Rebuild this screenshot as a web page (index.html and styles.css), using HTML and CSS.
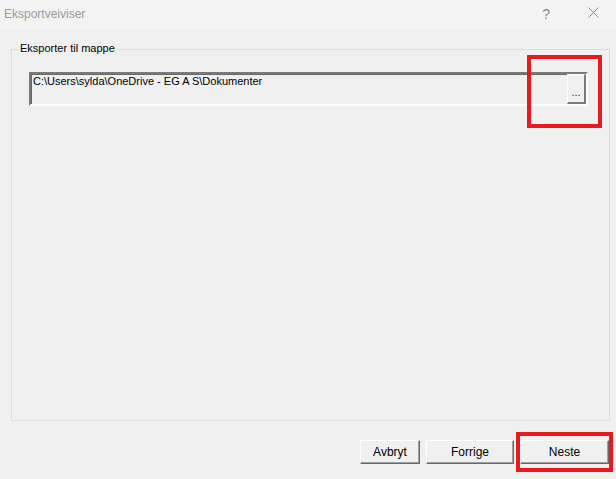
FILE: index.html
```html
<!DOCTYPE html>
<html lang="nb">
<head>
    <meta charset="UTF-8">
    <title>Eksportveiviser</title>
    <link rel="stylesheet" href="styles.css">
</head>
<body>
    <div class="window">
        <!-- Title bar -->
        <div class="titlebar">
            <span class="title">Eksportveiviser</span>
            <span class="help">?</span>
            <svg class="close" width="11" height="11" viewBox="0 0 11 11">
                <path d="M0.5 0.5 L10.5 10.5 M10.5 0.5 L0.5 10.5" stroke="#8a8a8a" stroke-width="1" fill="none"/>
            </svg>
        </div>

        <!-- Client area -->
        <div class="client">
            <div class="group">
                <div class="group-title">Eksporter til mappe</div>
                <div class="pathbox">
                    <span class="path">C:\Users\sylda\OneDrive - EG A S\Dokumenter</span>
                    <button class="browse">...</button>
                </div>
            </div>

            <div class="footer">
                <button class="btn btn-small">Avbryt</button>
                <button class="btn">Forrige</button>
                <button class="btn btn-default">Neste</button>
            </div>
        </div>

        <div class="mark mark-browse"></div>
        <div class="mark mark-next"></div>
    </div>
</body>
</html>
```

FILE: styles.css
```css
/* Dialog base */
body {
    margin: 0;
    padding: 0;
    background: #f0f0f0;
    font-family: 'Liberation Sans', Arial, sans-serif;
    font-size: 11px;
    color: #000;
}

.window {
    position: relative;
    width: 616px;
    height: 479px;
    overflow: hidden;
}

/* Title bar */
.titlebar {
    height: 30px;
    background: #f3f3f3;
    display: flex;
    align-items: center;
}

.title {
    margin-left: 4px;
    margin-top: -2px;
    font-size: 12px;
    color: #9a9a9a;
}

.help {
    margin-left: auto;
    margin-top: -2px;
    font-size: 14px;
    color: #8a8a8a;
}

.close {
    margin-left: 38px;
    margin-right: 17px;
    margin-top: -6px;
}

/* Group box */
.client {
    padding-top: 19px;
}

.group {
    margin-left: 11px;
    width: 597px;
    height: 370px;
    border: 1px solid #dcdcdc;
}

.group-title {
    width: fit-content;
    margin-top: -8px;
    margin-left: 6px;
    padding: 0 2px;
    line-height: 13px;
    background: #f0f0f0;
}

.pathbox {
    display: flex;
    margin-top: 17px;
    margin-left: 17px;
    width: 555px;
    height: 30px;
    border-style: solid;
    border-width: 2px;
    border-color: #7a7a7a #ffffff #ffffff #7a7a7a;
    box-shadow: inset 1px 1px 0 #696969;
    background: #f0f0f0;
}

.path {
    flex: 1;
    padding: 1px 0 0 2px;
    line-height: 13px;
}

.browse {
    width: 19px;
    height: 30px;
    margin: 0;
    padding: 6px 0 0 0;
    border-style: solid;
    border-width: 1px 2px 2px 1px;
    border-color: #ffffff #7a7a7a #7a7a7a #ffffff;
    background: #f0f0f0;
    font-family: 'Liberation Sans', Arial, sans-serif;
    font-size: 11px;
    color: #5a0a6a;
    line-height: 10px;
}

/* Wizard buttons */
.footer {
    display: flex;
    justify-content: flex-end;
    gap: 6px;
    margin-top: 19px;
    padding-right: 7px;
}

.btn {
    width: 88px;
    height: 24px;
    margin: 0;
    padding: 0;
    border-style: solid;
    border-width: 1px;
    border-color: #ffffff #696969 #696969 #ffffff;
    box-shadow: inset -1px -1px 0 #a0a0a0;
    background: #f0f0f0;
    font-family: 'Liberation Sans', Arial, sans-serif;
    font-size: 12px;
    color: #000;
}

.btn-small {
    width: 60px;
}

.btn-default {
    width: 89px;
}

/* Red highlight frames drawn over the dialog */
.mark {
    position: absolute;
    border: 4px solid #e8191f;
    box-sizing: border-box;
}

.mark-browse {
    left: 527px;
    top: 55px;
    width: 75px;
    height: 73px;
}

.mark-next {
    left: 516px;
    top: 432px;
    width: 97px;
    height: 40px;
}
```
